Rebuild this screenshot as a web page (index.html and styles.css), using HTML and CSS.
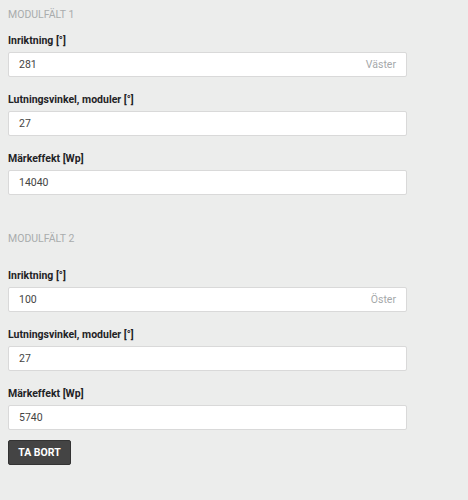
FILE: index.html
```html
<!DOCTYPE html>
<html lang="sv">
<head>
<meta charset="utf-8">
<link rel="stylesheet" href="styles.css">
</head>
<body>
<div class="page">
  <section class="group">
    <h2 class="group-title">Modulfält 1</h2>
    <div class="field">
      <label class="label">Inriktning [°]</label>
      <div class="input"><span class="value">281</span><span class="suffix">Väster</span></div>
    </div>
    <div class="field">
      <label class="label">Lutningsvinkel, moduler [°]</label>
      <div class="input"><span class="value">27</span></div>
    </div>
    <div class="field">
      <label class="label">Märkeffekt [Wp]</label>
      <div class="input"><span class="value">14040</span></div>
    </div>
  </section>
  <section class="group group-second">
    <h2 class="group-title">Modulfält 2</h2>
    <div class="field">
      <label class="label">Inriktning [°]</label>
      <div class="input"><span class="value">100</span><span class="suffix">Öster</span></div>
    </div>
    <div class="field">
      <label class="label">Lutningsvinkel, moduler [°]</label>
      <div class="input"><span class="value">27</span></div>
    </div>
    <div class="field">
      <label class="label">Märkeffekt [Wp]</label>
      <div class="input"><span class="value">5740</span></div>
    </div>
    <button class="btn">TA BORT</button>
  </section>
</div>
</body>
</html>
```
FILE: styles.css
```css
html, body {
  margin: 0;
  padding: 0;
  background: #ecedec;
  font-family: Roboto, "Liberation Sans", sans-serif;
  font-size: 10.5px;
  color: #222;
}
.page {
  padding: 8px 8px 0 8px;
  width: 399px;
}
.group {
  display: flex;
  flex-direction: column;
}
.group-title {
  margin: 0;
  font-size: 10.5px;
  font-weight: 400;
  line-height: 14px;
  text-transform: uppercase;
  color: #a9acad;
}
.group-second {
  margin-top: 37px;
}
.group-second .group-title {
  margin-bottom: 11px;
}
.field {
  margin-top: 12px;
}
.field + .field {
  margin-top: 16px;
}
.label {
  display: block;
  font-weight: 700;
  line-height: 14px;
  color: #1f2326;
  margin-bottom: 4px;
}
.input {
  box-sizing: border-box;
  height: 25px;
  background: #fff;
  border: 1px solid #d9d9d9;
  border-radius: 2px;
  display: flex;
  align-items: center;
  justify-content: space-between;
  padding: 0 10px 0 10px;
  color: #444;
}
.suffix {
  color: #a5a8aa;
}
.btn {
  align-self: flex-start;
  margin-top: 10px;
  height: 25px;
  width: 63px;
  padding: 0;
  background: #444;
  border: 1px solid #333;
  border-radius: 2px;
  color: #fff;
  font-family: Roboto, "Liberation Sans", sans-serif;
  font-size: 10.5px;
  font-weight: 700;
}
```
